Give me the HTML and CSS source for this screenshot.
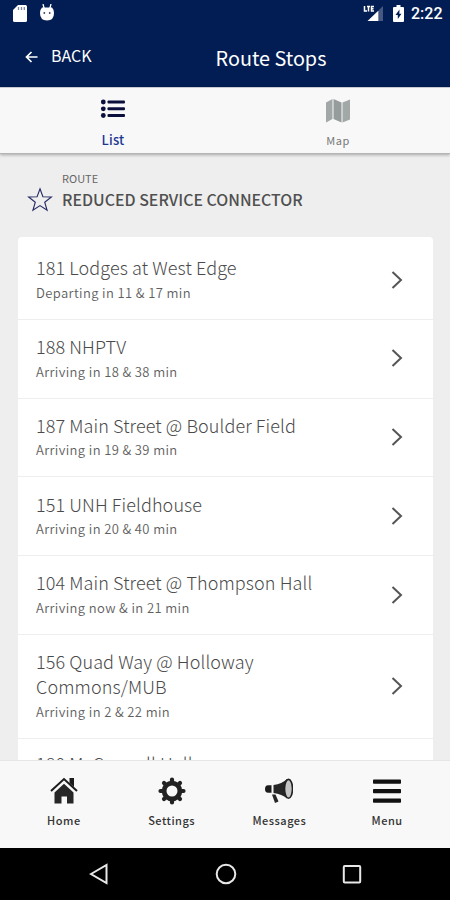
FILE: index.html
```html
<!DOCTYPE html>
<html lang="en">
<head>
    <meta charset="utf-8">
    <title>Route Stops</title>
    <link rel="stylesheet" href="styles.css">
</head>
<body>
    <header class="header">
        <div class="status-bar">
            <svg class="sd-icon" width="14" height="17" viewBox="0 0 14 17">
                <path d="M5 0h7.500q1.500 0 1.500 1.500v14q0 1.500-1.500 1.500h-11Q0 17 0 15.500V5z" fill="#fff"/>
                <path d="M5.500 2v3M8.500 2v3M11.300 2v3" stroke="#8088a0" stroke-width="1.300"/>
            </svg>
            <svg class="droid-icon" width="14" height="17" viewBox="0 0 14 17">
                <path d="M3 0l1.300 5M11 0L9.700 5" stroke="#fff" stroke-width="1.300"/>
                <path d="M2 3.500h10q2 2 2 5.500 0 7.500-7 7.500T0 9q0-3.500 2-5.500z" fill="#fff"/>
                <circle cx="4.300" cy="9" r=".9" fill="#39415f"/>
                <circle cx="9.700" cy="9" r=".9" fill="#39415f"/>
            </svg>
            <div class="status-right">
                <svg width="21" height="17" viewBox="0 0 21 17">
                    <path d="M16 5l4-4v15h-4z" fill="#46587f"/>
                    <path d="M15.500 5.500V16H4.500z" fill="#fff"/>
                    <path d="M1.500 1v5H4M4 1.500h3M5.500 1.500v5M11 1.500H8.500v4.500H11M8.500 3.800h2" fill="none" stroke="#fff" stroke-width="1.500"/>
                </svg>
                <svg class="battery-icon" width="11" height="17" viewBox="0 0 11 17">
                    <path d="M3.500 0h4v2H10q1 0 1 1v13q0 1-1 1H1q-1 0-1-1V3q0-1 1-1h2.500z" fill="#fff"/>
                    <path d="M6.500 4.500L2.500 10h2.300v4L8.500 8.700H6.300z" fill="#021d54"/>
                </svg>
                <span class="clock">2:22</span>
            </div>
        </div>
        <div class="title-bar">
            <a class="back">
                <svg width="13" height="12" viewBox="0 0 13 12">
                    <path d="M6.500 1L1.500 6l5 5M1.500 6h11" fill="none" stroke="#fff" stroke-width="1.700"/>
                </svg>
                <span>BACK</span>
            </a>
            <h1>Route Stops</h1>
        </div>
    </header>

    <div class="tabs">
        <div class="tab active">
            <svg width="26" height="20" viewBox="0 0 26 20">
                <g fill="#0b0f3c">
                    <circle cx="3.300" cy="3" r="2.400"/>
                    <circle cx="3.300" cy="9.800" r="2.400"/>
                    <circle cx="3.300" cy="16.500" r="2.400"/>
                    <rect x="7.500" y="1.500" width="17.500" height="3.100" rx="1"/>
                    <rect x="7.500" y="8.200" width="17.500" height="3.100" rx="1"/>
                    <rect x="7.500" y="15" width="17.500" height="3.100" rx="1"/>
                </g>
            </svg>
            <span>List</span>
        </div>
        <div class="tab">
            <svg width="26" height="26" viewBox="0 0 26 26">
                <path d="M1 4.500L7.500 1v20L1 24.500z" fill="#a2a7a8"/>
                <path d="M8.500 1l8 3.500v20l-8-3.500z" fill="#969b9c"/>
                <path d="M17.500 4.500L25 1.500v20l-7.500 3z" fill="#a2a7a8"/>
            </svg>
            <span>Map</span>
        </div>
    </div>

    <main class="content">
        <div class="route">
            <svg width="26" height="26" viewBox="0 0 26 26">
                <path d="M13 1.800l2.900 7.900 8.500.3-6.700 5.200 2.400 8.100-7.100-4.700-7.100 4.700 2.400-8.100L1.600 10l8.500-.3z" fill="none" stroke="#252963" stroke-width="1.100"/>
            </svg>
            <div>
                <div class="route-label">ROUTE</div>
                <h2>REDUCED SERVICE CONNECTOR</h2>
            </div>
        </div>

        <div class="stops">
            <div class="stop">
                <div class="stop-text">
                    <h3>181 Lodges at West Edge</h3>
                    <p>Departing in 11 &amp; 17 min</p>
                </div>
                <svg class="arrow" viewBox="0 0 12 20"><path d="M1.500 2l8.500 8-8.500 8"/></svg>
            </div>
            <div class="stop">
                <div class="stop-text">
                    <h3>188 NHPTV</h3>
                    <p>Arriving in 18 &amp; 38 min</p>
                </div>
                <svg class="arrow" viewBox="0 0 12 20"><path d="M1.500 2l8.500 8-8.500 8"/></svg>
            </div>
            <div class="stop">
                <div class="stop-text">
                    <h3>187 Main Street @ Boulder Field</h3>
                    <p>Arriving in 19 &amp; 39 min</p>
                </div>
                <svg class="arrow" viewBox="0 0 12 20"><path d="M1.500 2l8.500 8-8.500 8"/></svg>
            </div>
            <div class="stop">
                <div class="stop-text">
                    <h3>151 UNH Fieldhouse</h3>
                    <p>Arriving in 20 &amp; 40 min</p>
                </div>
                <svg class="arrow" viewBox="0 0 12 20"><path d="M1.500 2l8.500 8-8.500 8"/></svg>
            </div>
            <div class="stop">
                <div class="stop-text">
                    <h3>104 Main Street @ Thompson Hall</h3>
                    <p>Arriving now &amp; in 21 min</p>
                </div>
                <svg class="arrow" viewBox="0 0 12 20"><path d="M1.500 2l8.500 8-8.500 8"/></svg>
            </div>
            <div class="stop">
                <div class="stop-text">
                    <h3>156 Quad Way @ Holloway Commons/MUB</h3>
                    <p>Arriving in 2 &amp; 22 min</p>
                </div>
                <svg class="arrow" viewBox="0 0 12 20"><path d="M1.500 2l8.500 8-8.500 8"/></svg>
            </div>
            <div class="stop">
                <div class="stop-text">
                    <h3>180 McConnell Hall</h3>
                </div>
            </div>
        </div>
    </main>

    <nav class="bottom-nav">
        <div class="nav-item">
            <svg width="28" height="28" viewBox="0 0 28 28">
                <path d="M1 14L14 2l13 12" fill="none" stroke="#1c1c1c" stroke-width="2"/>
                <path d="M19.500 1H24v9l-4.500-4z" fill="#1c1c1c"/>
                <path d="M4.500 15.500L14 6.800l9.500 8.700V26.500h-6.500v-7h-5.500v7h-7z" fill="#262626"/>
            </svg>
            <span>Home</span>
        </div>
        <div class="nav-item">
            <svg width="28" height="28" viewBox="0 0 28 28">
                <circle cx="14" cy="14" r="7.900" fill="none" stroke="#222" stroke-width="4.800"/>
                <g fill="none" stroke="#222" stroke-width="4.200" stroke-linecap="round">
                    <path d="M14 2.500v3M14 22.500v3M2.500 14h3M22.500 14h3M6 6l1.500 1.500M20.500 20.500L22 22M22 6l-1.500 1.500M7.500 20.500L6 22"/>
                </g>
            </svg>
            <span>Settings</span>
        </div>
        <div class="nav-item">
            <svg width="28" height="28" viewBox="0 0 28 28">
                <path d="M6.500 8.200H3Q0 8.200 0 12t3 3.800h3.500z" fill="#1c1c1c"/>
                <path d="M8.500 8Q17 7 22 2v19.500q-5-4.500-13.500-5.500z" fill="#262626"/>
                <ellipse cx="23.500" cy="11.800" rx="4" ry="9.400" fill="#c4c4c4" stroke="#222" stroke-width="1.600"/>
                <path d="M7 17.500h3.500l3 7-3.500 1.500z" fill="#262626"/>
            </svg>
            <span>Messages</span>
        </div>
        <div class="nav-item">
            <svg width="28" height="28" viewBox="0 0 28 28">
                <g fill="#111">
                    <rect y="2.500" width="28" height="4.200" rx=".8"/>
                    <rect y="12" width="28" height="4.200" rx=".8"/>
                    <rect y="21.500" width="28" height="4.200" rx=".8"/>
                </g>
            </svg>
            <span>Menu</span>
        </div>
    </nav>

    <footer class="system-bar">
        <svg width="20" height="22" viewBox="0 0 20 22"><path d="M2 11L17.500 2v18z"/></svg>
        <svg width="22" height="22" viewBox="0 0 22 22"><circle cx="11" cy="11" r="9.300"/></svg>
        <svg width="20" height="22" viewBox="0 0 20 22"><rect x="1.800" y="3" width="16.400" height="16.400" rx="1"/></svg>
    </footer>
</body>
</html>
```

FILE: styles.css
```css
* {
    box-sizing: border-box;
}
body {
    margin: 0;
    width: 450px;
    height: 900px;
    overflow: hidden;
    display: flex;
    flex-direction: column;
    background: #eee;
    font-family: "Noto Sans CJK SC", "Noto Sans", sans-serif;
}
h1, h2, h3, p {
    margin: 0;
}
svg {
    display: block;
    flex: none;
}

/* header */
.header {
    height: 87px;
    flex: none;
    background: #021d54;
    color: #fff;
}
.status-bar {
    height: 28px;
    padding: 5px 8px 0 13px;
    display: flex;
    align-items: flex-start;
}
.droid-icon {
    margin-left: 13px;
    margin-top: -1px;
}
.status-right {
    margin-left: auto;
    display: flex;
    align-items: flex-start;
}
.battery-icon {
    margin-left: 9px;
}
.clock {
    width: 31px;
    margin-left: 7px;
    font-family: Roboto, sans-serif;
    font-size: 16px;
    font-weight: 500;
    line-height: 18px;
}
.title-bar {
    height: 57px;
    display: grid;
    grid-template-columns: 92px 358px;
    align-items: center;
}
.back {
    display: flex;
    align-items: center;
    gap: 13px;
    padding-left: 25px;
    font-size: 16px;
    line-height: 20px;
    padding-bottom: 3px;
}
.back svg {
    margin-top: 3px;
}
h1 {
    width: 358px;
    padding-top: 2px;
    text-align: center;
    font-size: 19.800px;
    font-weight: 400;
    line-height: 28px;
}

/* tabs */
.tabs {
    position: relative;
    height: 67px;
    flex: none;
    display: flex;
    background: #f8f8f8;
    border-top: 1px solid #c8c8d0;
    border-bottom: 1px solid #b5b5b5;
    box-shadow: 0 1px 3px rgba(0, 0, 0, .3);
}
.tab {
    flex: 1;
    padding: 10px 0 0 1px;
    display: flex;
    flex-direction: column;
    align-items: center;
    color: #777;
    font-size: 11px;
    letter-spacing: .5px;
    line-height: 16px;
}
.tab span {
    margin-top: 8px;
}
.tab.active {
    padding-top: 11px;
    color: #1c3694;
    font-size: 13px;
    font-weight: 500;
    letter-spacing: .2px;
}
.tab.active span {
    margin-top: 13px;
}

/* route and stops */
.content {
    flex: 1;
    min-height: 0;
    overflow: hidden;
    padding: 16px 17px 0 18px;
}
.route {
    height: 67px;
    display: flex;
    padding-left: 9px;
}
.route svg {
    margin-top: 17px;
}
.route div {
    margin-left: 4px;
}
.route .route-label {
    margin-left: 5px;
    color: #666;
    font-size: 11px;
    line-height: 16px;
}
h2 {
    margin: 1px 0 0 5px;
    color: #505050;
    font-size: 15.900px;
    font-weight: 500;
    line-height: 26px;
}
.stops {
    padding-top: 4px;
    background: #fff;
    border-radius: 4px 4px 0 0;
}
.stop {
    display: flex;
    align-items: center;
    justify-content: space-between;
    padding: 14.300px 30px 15px 18px;
    border-bottom: 1px solid #eee;
}
.stop:last-child {
    padding-top: 12.300px;
}
.stop-text {
    width: 290px;
}
h3 {
    color: #4a4a4a;
    font-size: 18px;
    font-weight: 300;
    letter-spacing: .1px;
    line-height: 25px;
}
.stop p {
    margin-top: 1.500px;
    color: #606060;
    font-size: 13px;
    font-weight: 350;
    letter-spacing: .38px;
    line-height: 22px;
}
.arrow {
    width: 12px;
    height: 20px;
}
.arrow path {
    fill: none;
    stroke: #555;
    stroke-width: 2;
}

/* bottom bars */
.bottom-nav {
    height: 88px;
    flex: none;
    display: flex;
    padding: 16px 9px 0 10px;
    background: #f8f8f8;
    border-top: 1px solid #e6e6e6;
}
.nav-item {
    flex: 1;
    display: flex;
    flex-direction: column;
    align-items: center;
    color: #333;
    font-size: 11px;
    font-weight: 500;
    letter-spacing: .5px;
    line-height: 16px;
}
.nav-item span {
    margin-top: 7px;
}
.system-bar {
    height: 52px;
    flex: none;
    display: flex;
    justify-content: space-between;
    padding: 15px 88px 0 89px;
    background: #000;
}
.system-bar svg {
    fill: none;
    stroke: #e8e8e8;
    stroke-width: 2;
}
```
